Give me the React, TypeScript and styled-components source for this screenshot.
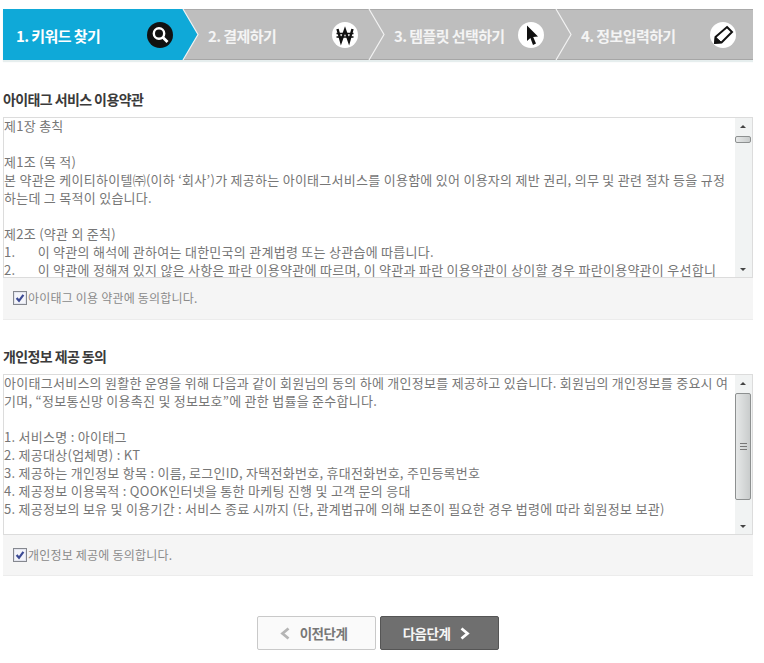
import styled, { createGlobalStyle } from "styled-components";

const GlobalStyle = createGlobalStyle`
  html, body {
    margin: 0;
    padding: 0;
    background: #fff;
    font-family: "Noto Sans CJK KR", "Noto Sans", sans-serif;
  }
`;

const Page = styled.div`
  width: 750px;
  height: 663px;
  padding: 9px 0 0 3px;
  overflow: hidden;
`;

const Steps = styled.div`
  display: flex;
  height: 49px;
  border-top: 1px solid #a9a9a9;
  border-bottom: 1px solid #a6a6a6;
  box-shadow: 0 2px 1px #e6eeee;
  background: #bebebe;
`;

const Step = styled.div<{ $w: number; $active?: boolean; $left: number; $right: number }>`
  position: relative;
  width: ${(p) => p.$w}px;
  flex: none;
  display: flex;
  align-items: center;
  justify-content: space-between;
  box-sizing: border-box;
  padding: 0 ${(p) => p.$right}px 0 ${(p) => p.$left}px;
  color: ${(p) => (p.$active ? "#fff" : "#f4f4f4")};
  font-size: 15px;
  font-weight: 700;
  letter-spacing: -0.6px;
`;

const ActiveFill = styled.svg`
  position: absolute;
  left: 0;
  top: -1px;
  z-index: 1;
`;

const Chevron = styled.svg`
  position: absolute;
  left: 100%;
  top: -1px;
  margin-left: -1px;
  z-index: 2;
`;

const StepLabel = styled.span`
  position: relative;
  z-index: 3;
  padding-top: 2px;
`;

const StepIcon = styled.svg`
  position: relative;
  z-index: 3;
  flex: none;
`;

const SectionTitle = styled.h2<{ $top: number }>`
  margin: ${(p) => p.$top}px 0 9px;
  font-size: 14px;
  line-height: 18px;
  height: 18px;
  font-weight: 700;
  color: #3a3a3a;
  letter-spacing: -0.6px;
`;

const TermsBox = styled.div`
  display: flex;
  height: 161px;
  box-sizing: border-box;
  border: 1px solid #dcdcdc;
`;

const TermsText = styled.div`
  flex: 1;
  min-width: 0;
  margin-top: -1px;
  white-space: pre;
  font-size: 13px;
  line-height: 18px;
  letter-spacing: 0.27px;
  color: #767676;
`;

const Scrollbar = styled.div`
  position: relative;
  width: 17px;
  flex: none;
  background: #f1f3f3;
`;

const ScrollArrow = styled.div<{ $down?: boolean }>`
  position: absolute;
  left: 5px;
  ${(p) => (p.$down ? "bottom: 6px;" : "top: 7px;")}
  width: 0;
  height: 0;
  border-left: 3.5px solid transparent;
  border-right: 3.5px solid transparent;
  ${(p) => (p.$down ? "border-top: 3px solid #444;" : "border-bottom: 3px solid #444;")}
`;

const ScrollThumb = styled.div<{ $top: number; $h: number }>`
  position: absolute;
  left: 0;
  right: 1px;
  top: ${(p) => p.$top}px;
  height: ${(p) => p.$h}px;
  box-sizing: border-box;
  border: 1px solid #8d9090;
  border-radius: 2px;
  background: linear-gradient(90deg, #e6e8e8, #c9cccc);
  display: flex;
  align-items: center;
  justify-content: center;
`;

const Grip = styled.div`
  width: 7px;
  height: 7px;
  background: repeating-linear-gradient(180deg, #777 0 1px, transparent 1px 3px);
`;

const AgreeRow = styled.label<{ $h: number }>`
  display: flex;
  align-items: flex-start;
  height: ${(p) => p.$h}px;
  box-sizing: border-box;
  padding: 13px 0 0 10px;
  background: #f5f5f5;
  border-bottom: 1px solid #ececec;
  font-size: 12px;
  line-height: 14px;
  color: #8a8a8a;
  letter-spacing: 0.2px;
`;

const CheckIcon = styled.svg`
  flex: none;
  margin-right: 1px;
`;

const Actions = styled.div`
  display: flex;
  justify-content: center;
  gap: 4px;
  margin-top: 40px;
`;

const NavButton = styled.button<{ $primary?: boolean }>`
  display: flex;
  align-items: center;
  justify-content: center;
  gap: 9px;
  width: 119px;
  height: 34px;
  padding: 0 6px 0 0;
  box-sizing: border-box;
  border-radius: 2px;
  border: 1px solid ${(p) => (p.$primary ? "#555" : "#c9c9c9")};
  background: ${(p) => (p.$primary ? "#6f6f6f" : "#fafafa")};
  color: ${(p) => (p.$primary ? "#f6f6f6" : "#777")};
  font-family: inherit;
  font-size: 13.5px;
  font-weight: 700;
  letter-spacing: -0.5px;
`;

function ChevronLine() {
  return (
    <Chevron width="18" height="51" viewBox="0 0 18 51">
      <path d="M1 0 L16 25.5 L1 51" fill="none" stroke="#f2f2f2" strokeWidth="1.2" />
    </Chevron>
  );
}

const termsOne = `제1장 총칙

제1조 (목 적)
본 약관은 케이티하이텔㈜(이하 ‘회사’)가 제공하는 아이태그서비스를 이용함에 있어 이용자의 제반 권리, 의무 및 관련 절차 등을 규정
하는데 그 목적이 있습니다.

제2조 (약관 외 준칙)
1.       이 약관의 해석에 관하여는 대한민국의 관계법령 또는 상관습에 따릅니다.
2.       이 약관에 정해져 있지 않은 사항은 파란 이용약관에 따르며, 이 약관과 파란 이용약관이 상이할 경우 파란이용약관이 우선합니`;

const termsTwo = `아이태그서비스의 원활한 운영을 위해 다음과 같이 회원님의 동의 하에 개인정보를 제공하고 있습니다. 회원님의 개인정보를 중요시 여
기며, “정보통신망 이용촉진 및 정보보호”에 관한 법률을 준수합니다.

1. 서비스명 : 아이태그
2. 제공대상(업체명) : KT
3. 제공하는 개인정보 항목 : 이름, 로그인ID, 자택전화번호, 휴대전화번호, 주민등록번호
4. 제공정보 이용목적 : QOOK인터넷을 통한 마케팅 진행 및 고객 문의 응대
5. 제공정보의 보유 및 이용기간 : 서비스 종료 시까지 (단, 관계법규에 의해 보존이 필요한 경우 법령에 따라 회원정보 보관)`;

function Checked() {
  return (
    <CheckIcon width="14" height="14" viewBox="0 0 14 14">
      <rect x="0.5" y="0.5" width="13" height="13" fill="#e3e5ee" stroke="#85888f" />
      <rect x="2" y="2" width="10" height="10" fill="#f4f5fa" />
      <path d="M3.6 7 L6 9.8 L10.4 3.8" fill="none" stroke="#3c4a94" strokeWidth="2.2" />
    </CheckIcon>
  );
}

export default function App() {
  return (
    <Page>
      <GlobalStyle />
      <Steps>
        <Step $w={180} $active $left={13} $right={10}>
          <ActiveFill width="197" height="51" viewBox="0 0 197 51">
            <path d="M0 0 H180 L195 25.5 L180 51 H0 Z" fill="#0fa9d8" />
          </ActiveFill>
          <ChevronLine />
          <StepLabel>1. 키워드 찾기</StepLabel>
          <StepIcon width="26" height="26" viewBox="0 0 26 26">
            <circle cx="13" cy="13" r="13" fill="#111" />
            <circle cx="12" cy="11.5" r="5.2" fill="none" stroke="#fff" strokeWidth="2.4" />
            <path d="M15.5 15 L20.5 20" stroke="#fff" strokeWidth="2.8" />
          </StepIcon>
        </Step>
        <Step $w={186} $left={25} $right={11}>
          <ChevronLine />
          <StepLabel>2. 결제하기</StepLabel>
          <StepIcon width="26" height="26" viewBox="0 0 26 26">
            <circle cx="13" cy="13" r="13" fill="#fff" />
            <path d="M5.5 7 L9 19.5 L13 8 L17 19.5 L20.5 7" fill="none" stroke="#111" strokeWidth="2.4" />
            <path d="M4.5 11.5 H21.5 M4.5 15 H21.5" stroke="#111" strokeWidth="1.7" />
          </StepIcon>
        </Step>
        <Step $w={187} $left={25} $right={12}>
          <ChevronLine />
          <StepLabel>3. 템플릿 선택하기</StepLabel>
          <StepIcon width="26" height="26" viewBox="0 0 26 26">
            <circle cx="13" cy="13" r="13" fill="#fff" />
            <path d="M9 3.5 V19 L12.4 16 L15 23 L18 21.6 L15.2 15 L20 14.6 Z" fill="#111" />
          </StepIcon>
        </Step>
        <Step $w={197} $left={25} $right={17}>
          <StepLabel>4. 정보입력하기</StepLabel>
          <StepIcon width="26" height="26" viewBox="0 0 26 26">
            <circle cx="13" cy="13" r="13" fill="#fff" />
            <path d="M17 5 L22 10 L11.5 20.5 L5 21 L5.5 15 Z" fill="#fff" stroke="#111" strokeWidth="2" />
            <path d="M5.5 15 L11.5 20.5 L5 21 Z" fill="#111" stroke="#111" />
          </StepIcon>
        </Step>
      </Steps>

      <SectionTitle $top={30}>아이태그 서비스 이용약관</SectionTitle>
      <TermsBox>
        <TermsText>{termsOne}</TermsText>
        <Scrollbar>
          <ScrollArrow />
          <ScrollThumb $top={18} $h={7} />
          <ScrollArrow $down />
        </Scrollbar>
      </TermsBox>
      <AgreeRow $h={42}>
        <Checked />
        아이태그 이용 약관에 동의합니다.
      </AgreeRow>

      <SectionTitle $top={27}>개인정보 제공 동의</SectionTitle>
      <TermsBox>
        <TermsText>{termsTwo}</TermsText>
        <Scrollbar>
          <ScrollArrow />
          <ScrollThumb $top={18} $h={107}>
            <Grip />
          </ScrollThumb>
          <ScrollArrow $down />
        </Scrollbar>
      </TermsBox>
      <AgreeRow $h={41}>
        <Checked />
        개인정보 제공에 동의합니다.
      </AgreeRow>

      <Actions>
        <NavButton>
          <svg width="11" height="13" viewBox="0 0 11 13">
            <path d="M8.5 1.5 L2.5 6.5 L8.5 11.5" fill="none" stroke="#b5b5b5" strokeWidth="2.8" />
          </svg>
          이전단계
        </NavButton>
        <NavButton $primary>
          다음단계
          <svg width="11" height="13" viewBox="0 0 11 13">
            <path d="M2.5 1.5 L8.5 6.5 L2.5 11.5" fill="none" stroke="#fff" strokeWidth="2.8" />
          </svg>
        </NavButton>
      </Actions>
    </Page>
  );
}
